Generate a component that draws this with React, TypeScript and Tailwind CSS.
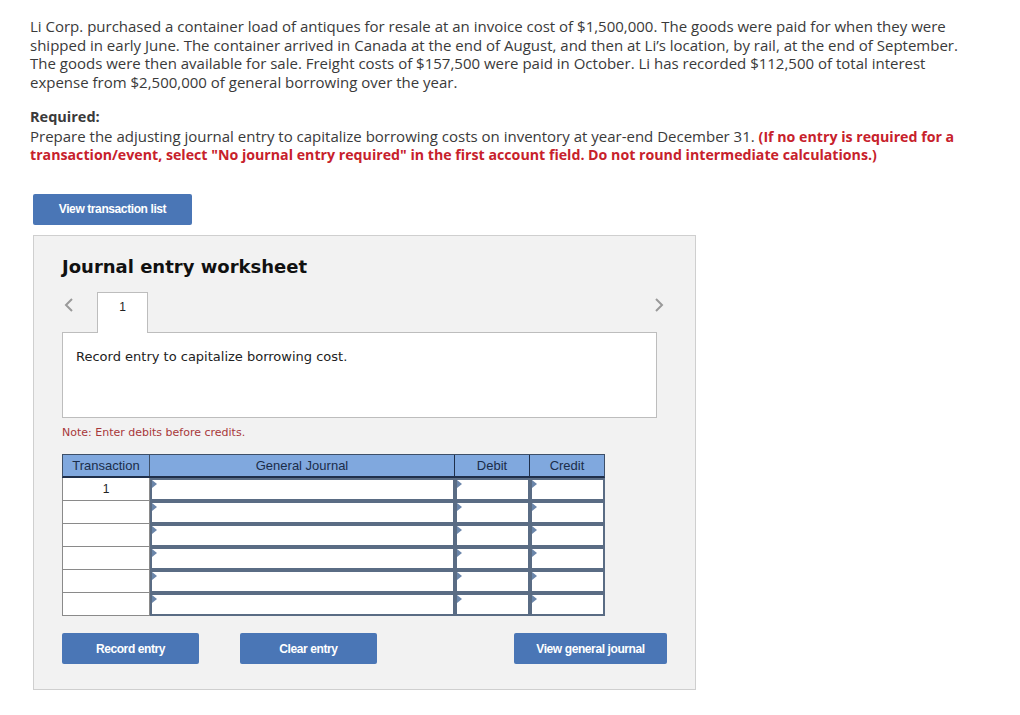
import React from "react";

const rows = [1, 2, 3, 4, 5, 6];

function InputCell({ width }: { width: string }) {
  return (
    <div className={`relative h-full bg-white border-2 border-[#5a6c84] ${width}`}>
      {/* small dropdown marker */}
      <span className="absolute left-0 top-0 h-0 w-0 border-y-[4px] border-l-[5px] border-y-transparent border-l-[#6b86aa]" />
    </div>
  );
}

function BlueButton({ label, width }: { label: string; width: string }) {
  return (
    <button
      className={`h-[31px] ${width} rounded-[2px] bg-[#4a76b6] text-white text-[12px] font-bold tracking-[-0.4px] font-['Liberation_Sans',Arial,sans-serif]`}
    >
      {label}
    </button>
  );
}

export default function App() {
  return (
    <div className="min-h-[715px] w-[1020px] bg-white text-[#3a3a3a] font-['Open_Sans','Lato',sans-serif]">
      <div className="pl-[30px] pr-[20px] pt-[17px]">
        {/* Problem */}
        <p className="text-[15px] leading-[18.5px] whitespace-nowrap">
          <span className="block">Li Corp. purchased a container load of antiques for resale at an invoice cost of $1,500,000. The goods were paid for when they were</span>
          <span className="block">shipped in early June. The container arrived in Canada at the end of August, and then at Li’s location, by rail, at the end of September.</span>
          <span className="block">The goods were then available for sale. Freight costs of $157,500 were paid in October. Li has recorded $112,500 of total interest</span>
          <span className="block">expense from $2,500,000 of general borrowing over the year.</span>
        </p>

        <div className="mt-[17px] text-[15px] leading-[18.5px] whitespace-nowrap">
          <p className="font-bold text-[14.5px]">Required:</p>
          <p className="block">
            Prepare the adjusting journal entry to capitalize borrowing costs on inventory at year-end December 31.{" "}
            <span className="font-bold text-[14.2px] text-[#c7212b]">(If no entry is required for a</span>
          </p>
          <p className="font-bold text-[14.2px] text-[#c7212b]">
            transaction/event, select "No journal entry required" in the first account field. Do not round intermediate calculations.)
          </p>
        </div>
      </div>

      <div className="pl-[33px] pt-[29px]">
        <BlueButton label="View transaction list" width="w-[159px]" />

        {/* Worksheet */}
        <div className="mt-[10px] w-[663px] border border-[#cfcfcf] bg-[#f2f2f2] pl-[28px] pr-[38px] pt-[20px] pb-[25px]">
          <h2 className="text-[18px] font-bold text-[#111] font-['DejaVu_Sans',Verdana,sans-serif] leading-[22px]">
            Journal entry worksheet
          </h2>

          {/* Tabs */}
          <div className="mt-[14px] flex items-end">
            <span className="mb-[20px] ml-[2px] w-[33px]">
              <svg width="10" height="14" viewBox="0 0 10 14">
                <path d="M8 1 L2 7 L8 13" fill="none" stroke="#9a9a9a" strokeWidth="2" />
              </svg>
            </span>
            <div className="relative z-10 -mb-px flex h-[41px] w-[51px] items-start justify-center border border-b-0 border-[#bdbdbd] bg-white pt-[5px] text-[12px] text-[#222] font-['Liberation_Sans',Arial,sans-serif]">
              1
            </div>
            <div className="flex-1" />
            <span className="mb-[20px] mr-[-7px]">
              <svg width="10" height="14" viewBox="0 0 10 14">
                <path d="M2 1 L8 7 L2 13" fill="none" stroke="#9a9a9a" strokeWidth="2" />
              </svg>
            </span>
          </div>

          <div className="h-[86px] border border-[#bdbdbd] bg-white px-[13px] pt-[14px] text-[13px] text-[#222] font-['DejaVu_Sans',Verdana,sans-serif]">
            Record entry to capitalize borrowing cost.
          </div>

          <p className="mt-[7px] text-[11px] text-[#a8383a] font-['DejaVu_Sans',Verdana,sans-serif]">
            Note: Enter debits before credits.
          </p>

          {/* Table */}
          <div className="mt-[13px] w-[543px] font-['Liberation_Sans',Arial,sans-serif] text-[13px]">
            <div className="flex h-[24px] border border-[#3d4f68] border-b-2 border-b-[#1f2f4a] bg-[#80a8de] text-[#1b2d4a]">
              <div className="flex w-[87px] items-center justify-center border-r border-[#3d4f68]">Transaction</div>
              <div className="flex w-[305px] items-center justify-center border-r border-[#1f2f4a]">General Journal</div>
              <div className="flex w-[75px] items-center justify-center border-r border-[#1f2f4a]">Debit</div>
              <div className="flex flex-1 items-center justify-center">Credit</div>
            </div>
            {rows.map((r) => (
              <div key={r} className="flex h-[23px]">
                <div className="flex h-full w-[88px] items-center justify-center border border-t-0 border-[#8a8a8a] bg-white text-[12px] text-[#222]">
                  {r === 1 ? "1" : ""}
                </div>
                <InputCell width="w-[305px]" />
                <InputCell width="w-[75px]" />
                <InputCell width="w-[75px]" />
              </div>
            ))}
          </div>

          {/* Actions */}
          <div className="mt-[17px] flex w-[605px] items-center">
            <BlueButton label="Record entry" width="w-[137px]" />
            <div className="w-[41px]" />
            <BlueButton label="Clear entry" width="w-[137px]" />
            <div className="flex-1" />
            <BlueButton label="View general journal" width="w-[153px]" />
          </div>
        </div>
      </div>
    </div>
  );
}
